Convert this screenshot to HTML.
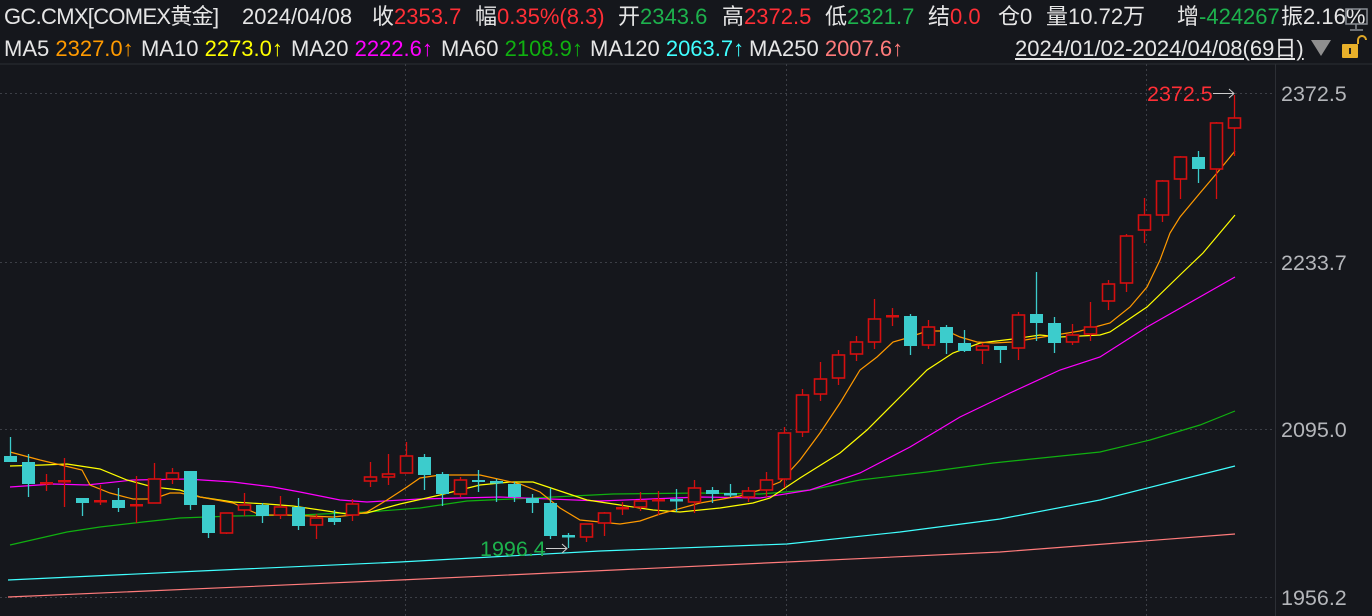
<!DOCTYPE html>
<html><head><meta charset="utf-8"><style>
*{margin:0;padding:0}
body{width:1372px;height:616px;background:#15171c;overflow:hidden;position:relative;font-family:"Liberation Sans","Noto Sans CJK SC",sans-serif;color:#e6e6e6}
.t{position:absolute;white-space:nowrap;font-size:22px;line-height:22px}
.r{color:#ff2f36}.g{color:#1db24d}.w{color:#e6e6e6}
.h1{top:6px}.h2{top:38px}
</style></head><body>
<span class="t h1" style="left:4px;letter-spacing:-0.7px">GC.CMX[COMEX黄金]</span>
<span class="t h1" style="left:242px">2024/04/08</span>
<span class="t h1" style="left:372px">收<span class="r">2353.7</span></span>
<span class="t h1" style="left:475px">幅<span class="r">0.35%(8.3)</span></span>
<span class="t h1" style="left:618px">开<span class="g">2343.6</span></span>
<span class="t h1" style="left:722px">高<span class="r">2372.5</span></span>
<span class="t h1" style="left:825px">低<span class="g">2321.7</span></span>
<span class="t h1" style="left:928px">结<span class="r">0.0</span></span>
<span class="t h1" style="left:998px">仓0</span>
<span class="t h1" style="left:1046px">量10.72万</span>
<span class="t h1" style="left:1177px">增<span class="g">-424267</span></span>
<span class="t h1" style="left:1281px">振2.16%</span>
<span class="t h2" style="left:4px">MA5 <span style="color:#ff9a00">2327.0↑</span></span>
<span class="t h2" style="left:141px">MA10 <span style="color:#ffff00">2273.0↑</span></span>
<span class="t h2" style="left:291px">MA20 <span style="color:#ff00ff">2222.6↑</span></span>
<span class="t h2" style="left:441px">MA60 <span style="color:#10b010">2108.9↑</span></span>
<span class="t h2" style="left:590px">MA120 <span style="color:#40ffff">2063.7↑</span></span>
<span class="t h2" style="left:749px">MA250 <span style="color:#ff7b7b">2007.6↑</span></span>
<span class="t h2" style="left:1015px;text-decoration:underline">2024/01/02-2024/04/08(69日)</span>
<svg width="1372" height="616" style="position:absolute;left:0;top:0" id="s">
<g fill="none" stroke="#8a8d93" stroke-width="1.5"><rect x="1346" y="9" width="21" height="15"/><path d="M1356 24v5M1350 30h13"/></g>
<path d="M1311 40h20l-10 16z" fill="#8f8f8f"/>
<path d="M1358 44v-4a4 4 0 0 1 8 0" fill="none" stroke="#e0a826" stroke-width="2"/>
<rect x="1342" y="44" width="16" height="14" fill="#e8b02a" rx="1"/><rect x="1349" y="48" width="2" height="6" fill="#222"/>
<line x1="0" y1="64" x2="1372" y2="64" stroke="#2c2f35"/>
<line x1="1275.5" y1="64" x2="1275.5" y2="616" stroke="#2c2f35"/>
<g stroke="#3c3f46" stroke-dasharray="2,3">
<line x1="0" y1="93.5" x2="1275" y2="93.5"/><line x1="0" y1="262.5" x2="1275" y2="262.5"/><line x1="0" y1="429.5" x2="1275" y2="429.5"/><line x1="0" y1="597.5" x2="1275" y2="597.5"/>
<line x1="405.5" y1="64" x2="405.5" y2="616"/><line x1="786.5" y1="64" x2="786.5" y2="616"/><line x1="1146.5" y1="64" x2="1146.5" y2="616"/>
</g>
<g font-size="21.5" fill="#b4b6ba" font-family="Liberation Sans,sans-serif">
<text x="1281" y="101">2372.5</text><text x="1281" y="270">2233.7</text><text x="1281" y="437">2095.0</text><text x="1281" y="605">1956.2</text>
</g>
<g fill="none" stroke-width="1.2">
<polyline stroke="#ff7b7b" points="8,597 400,580 787,562 1000,552 1235,534"/>
<polyline stroke="#40ffff" points="8,580 200,571 400,562 600,551 787,544 900,532 1000,519 1100,500 1235,466"/>
<polyline stroke="#10b010" points="10,545 67,532 100,527 143,522 180,518 233,516 300,515 367,512 420,508 467,501 533,498 613,494 700,493 760,494 810,490 860,480 927,472 993,463 1100,452 1150,440 1200,425 1235,411"/>
<polyline stroke="#ff00ff" points="10,487 53,484 87,485 133,480 187,479 233,482 273,487 300,492 340,500 367,502 420,499 500,497 600,501 700,497 760,498 810,490 860,473 910,447 960,417 1010,393 1060,370 1100,357 1147,327 1235,277"/>
<polyline stroke="#ffff00" points="10,466 43,465 67,464 100,469 127,480 153,487 180,490 200,497 233,502 267,504 293,506 327,511 347,514 367,513 400,504 440,495 480,485 510,482 533,482 560,491 587,500 620,505 653,510 680,512 720,508 753,503 770,498 800,478 840,453 867,430 900,397 927,370 953,353 980,343 1013,339 1040,335 1060,337 1100,335 1110,332 1147,307 1180,275 1203,253 1235,215"/>
<polyline stroke="#ff9a00" points="10,452 40,460 82,470 90,485 110,493 133,499 153,499 170,493 180,493 200,497 233,503 260,515 287,515 333,517 353,515 367,512 387,500 407,487 420,478 440,475 480,475 520,484 540,492 560,508 580,520 600,522 620,524 640,521 660,514 700,503 740,496 760,490 780,482 800,460 820,433 840,403 860,370 877,357 893,342 907,338 927,331 947,331 960,337 977,342 993,343 1013,342 1043,337 1080,331 1110,323 1130,307 1147,287 1160,260 1170,233 1180,217 1200,193 1217,173 1235,151"/>
</g>
<g id="c"></g>
<text x="1147" y="101" font-size="21.5" fill="#ff2f36" font-family="Liberation Sans,sans-serif">2372.5</text>
<path d="M1213 93.5h21M1229 89l5 4.5-5 4.5" stroke="#ccc" fill="none"/>
<text x="480" y="556" font-size="21.5" fill="#1db24d" font-family="Liberation Sans,sans-serif">1996.4</text>
<path d="M546 548.5h21M562 544l5 4.5-5 4.5" stroke="#ccc" fill="none"/>
</svg>
<script>
var d=[[456,462,437,462,'c'],[462,484,454,497,'c'],[483,483,474,491,'r'],[481,481,458,507,'r'],[498,503,498,516,'c'],[501,501,485,505,'r'],[500,508,488,512,'c'],[505,505,476,523,'r'],[479,503,463,503,'r'],[473,479,468,484,'r'],[471,505,471,510,'c'],[505,533,505,538,'c'],[513,533,513,534,'r'],[505,510,493,516,'r'],[505,516,503,523,'c'],[507,515,496,519,'r'],[507,526,498,530,'c'],[518,525,514,539,'r'],[518,522,510,525,'c'],[504,515,499,521,'r'],[477,481,462,487,'r'],[474,477,454,485,'r'],[456,473,442,473,'r'],[457,475,454,490,'c'],[474,494,472,506,'c'],[480,494,477,497,'r'],[480,482,470,492,'c'],[482,483,479,502,'c'],[484,497,482,502,'c'],[498,503,494,513,'c'],[503,536,488,539,'c'],[536,537,533,548,'c'],[524,537,524,542,'r'],[513,523,512,536,'r'],[508,508,502,515,'r'],[501,507,492,511,'r'],[500,500,491,515,'r'],[500,501,489,512,'c'],[488,502,480,513,'r'],[490,494,487,503,'c'],[494,495,484,497,'c'],[491,497,487,502,'r'],[480,490,472,497,'r'],[433,479,427,488,'r'],[395,432,389,437,'r'],[379,394,362,401,'r'],[355,378,350,385,'r'],[342,354,336,361,'r'],[319,342,299,349,'r'],[316,316,308,326,'r'],[316,346,314,355,'c'],[327,345,320,349,'r'],[327,343,325,354,'c'],[343,351,330,352,'c'],[346,350,343,364,'r'],[346,350,346,363,'c'],[315,348,312,360,'r'],[314,323,272,341,'c'],[323,343,317,353,'c'],[335,342,324,345,'r'],[327,334,302,341,'r'],[284,301,280,310,'r'],[236,283,234,292,'r'],[215,230,198,243,'r'],[181,215,180,222,'r'],[157,179,156,199,'r'],[157,169,151,183,'c'],[123,169,122,199,'r'],[118,128,95,156,'r']];
var h='';d.forEach(function(a,i){var x=10+18*i,col=a[4]=='r'?'#d50f0f':'#3ccccc';
h+='<line x1="'+(x+.5)+'" y1="'+a[2]+'" x2="'+(x+.5)+'" y2="'+a[3]+'" stroke="'+col+'" stroke-width="1.3"/>';
var ht=a[1]-a[0];if(ht<2){h+='<rect x="'+(x-6)+'" y="'+(a[0]-1)+'" width="13" height="2.5" fill="'+col+'"/>';}
else if(a[4]=='r'){h+='<rect x="'+(x-5.5)+'" y="'+a[0]+'" width="12" height="'+ht+'" fill="#15171c" stroke="'+col+'" stroke-width="1.6"/>';}
else{h+='<rect x="'+(x-6)+'" y="'+a[0]+'" width="13" height="'+ht+'" fill="'+col+'"/>';}});
document.getElementById('c').innerHTML=h;
</script>
</body></html>
